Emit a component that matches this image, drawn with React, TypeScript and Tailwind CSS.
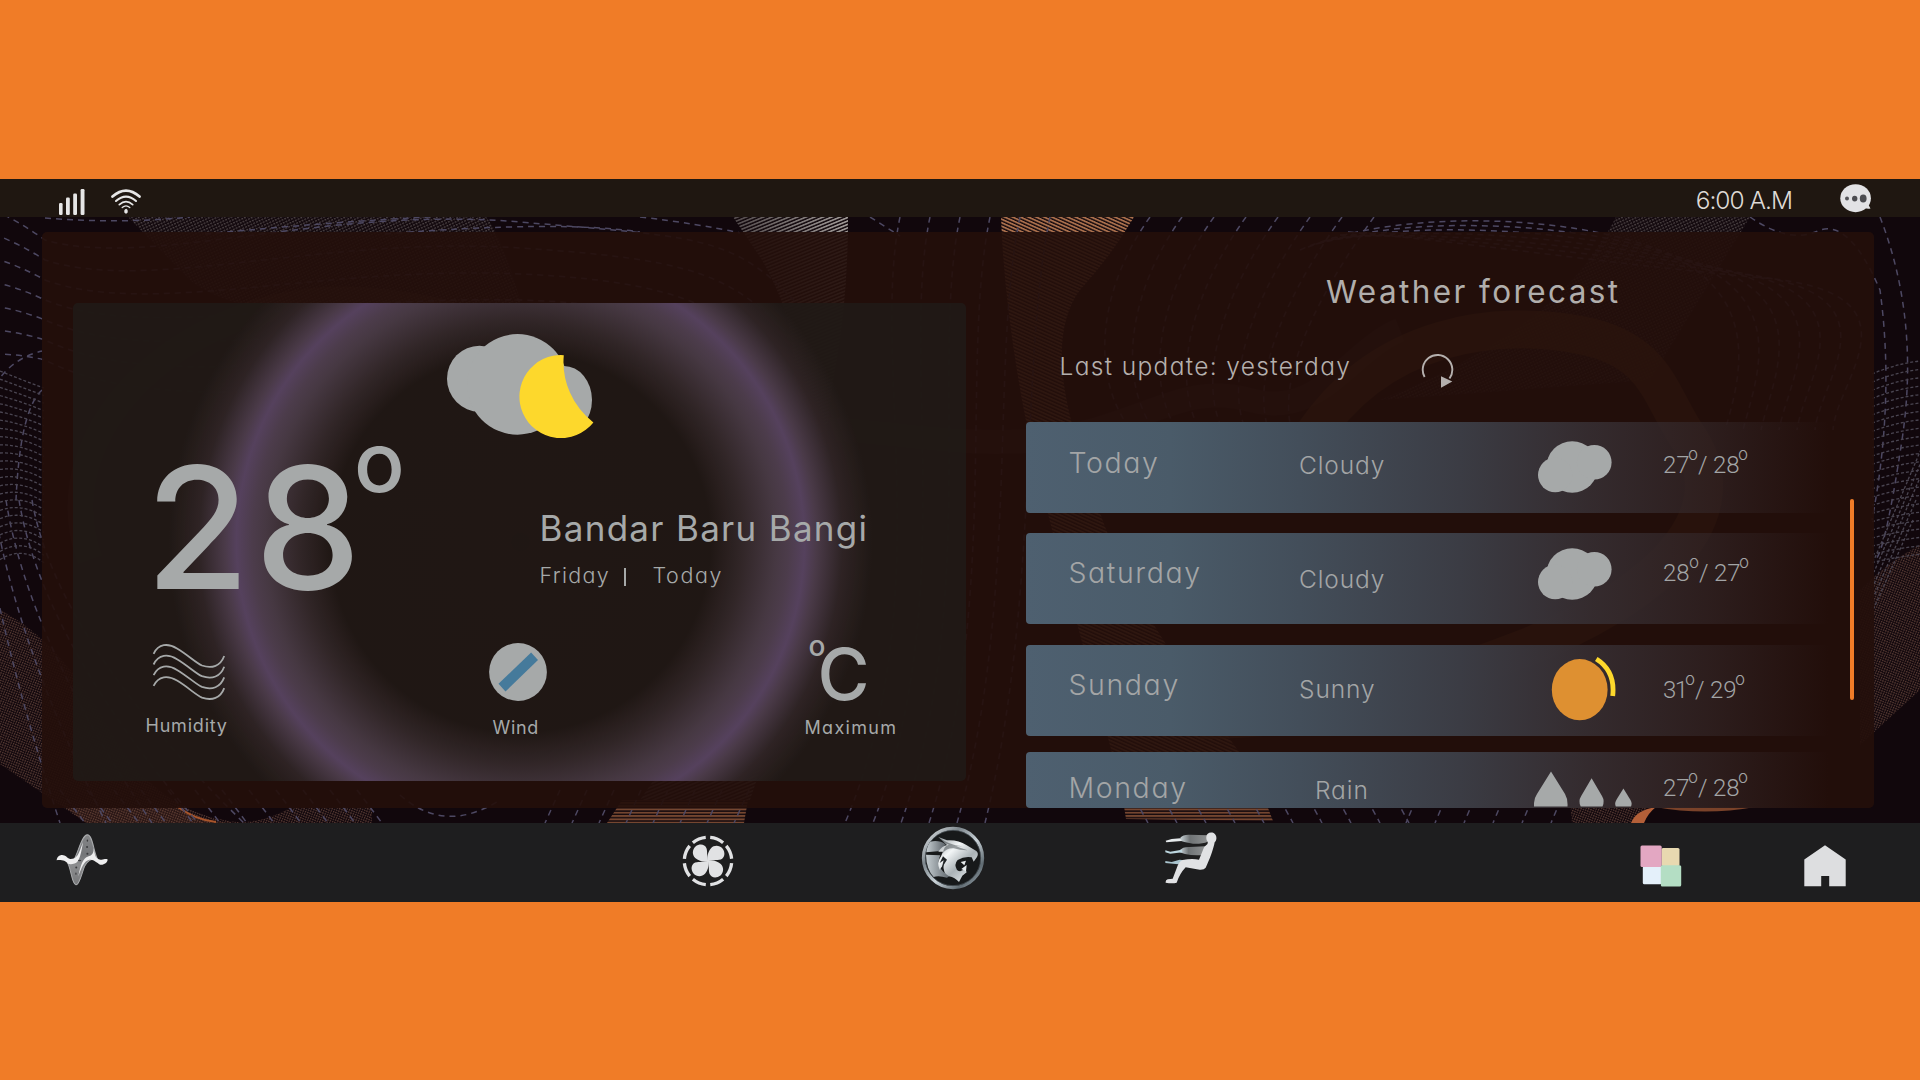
import React from "react";

const range = (n: number) => Array.from({ length: n }, (_, i) => i);

/* Decorative line mesh behind the panels */
function Backdrop() {
  return (
    <svg
      className="absolute inset-0 h-full w-full"
      viewBox="0 217 1920 606"
      preserveAspectRatio="none"
      fill="none"
    >
      <defs>
        <pattern id="whiteHatch" width="5" height="3.2" patternUnits="userSpaceOnUse" patternTransform="rotate(-22)">
          <rect width="5" height="1.7" fill="#a19b98" />
        </pattern>
        <pattern id="orangeHatch" width="5" height="3.2" patternUnits="userSpaceOnUse" patternTransform="rotate(24)">
          <rect width="5" height="1.8" fill="#a96f4c" />
        </pattern>
        <pattern id="flatHatch" width="5" height="3.3" patternUnits="userSpaceOnUse">
          <rect width="5" height="1.9" fill="#754630" />
        </pattern>
        <pattern id="brownDots" width="2.4" height="2.4" patternUnits="userSpaceOnUse" patternTransform="rotate(20)">
          <rect width="1.4" height="1.4" fill="#563a33" />
        </pattern>
        <pattern id="greyDots" width="3" height="3" patternUnits="userSpaceOnUse" patternTransform="rotate(-25)">
          <rect width="2" height="1.4" fill="#4a4142" />
        </pattern>
        <linearGradient id="fadeGrey" gradientUnits="userSpaceOnUse" x1="733" x2="848" y1="0" y2="0">
          <stop offset="0" stopColor="#fff" stopOpacity=".45" />
          <stop offset="1" stopColor="#fff" stopOpacity="1" />
        </linearGradient>
        <mask id="greyMask" maskUnits="userSpaceOnUse" x="540" y="217" width="320" height="606">
          <rect x="540" y="217" width="308" height="606" fill="url(#fadeGrey)" />
        </mask>
      </defs>

      {/* top ribbons */}
      <path d="M128 217H486Q500 232 520 300L528 330Q250 330 190 280Z" fill="url(#greyDots)" />
      <path d="M1616 217H1750L1650 380L1380 400Q1560 330 1616 217Z" fill="url(#greyDots)" />
      <path
        d="M733 217H848Q848 300 835 370C822 440 822 560 790 680L750 800H640C720 690 760 520 790 420C800 350 790 310 762 260Z"
        fill="url(#whiteHatch)"
        mask="url(#greyMask)"
      />
      <path
        d="M1001 217H1134Q1112 255 1080 290C1050 330 1060 400 1090 480C1120 600 1220 720 1272 800H1124C1100 700 1040 500 1022 400Q1004 300 1001 217Z"
        fill="url(#orangeHatch)"
      />

      {/* glowing bands */}
      <path d="M1310 440C1380 330 1500 320 1580 335C1660 350 1660 400 1690 440C1740 520 1650 600 1520 650S1300 720 1200 720" stroke="#7a5020" strokeOpacity=".7" strokeWidth="38" />
      <path d="M90 560C40 420 200 290 360 300S600 380 640 560S520 760 420 640S200 600 300 640" stroke="#6a5040" strokeOpacity=".3" strokeWidth="26" />
      <path d="M740 430C860 420 940 450 1040 440S1180 380 1250 400S1350 350 1400 330" stroke="#806058" strokeOpacity=".22" strokeWidth="24" />

      {/* side and bottom ribbons */}
      <path d="M0 610Q60 640 110 730T250 823H86L0 764Z" fill="url(#brownDots)" />
      <path d="M180 808Q195 823 240 823H86L66 808Z" fill="#7a4a30" fillOpacity=".22" />
      <path d="M290 808H372V823H240Q270 820 290 808Z" fill="url(#brownDots)" />
      <path d="M178 807Q196 820 216 822" stroke="#a8552b" strokeWidth="2" />
      <path d="M622 800H748L744 823H607Z" fill="url(#flatHatch)" />
      <path d="M1123 800H1265L1273 821L1126 819Z" fill="url(#flatHatch)" />
      <path d="M1570 800H1655L1640 823H1572Z" fill="url(#brownDots)" />
      <path d="M1656 807Q1636 810 1631 823H1644Q1648 813 1656 807Z" fill="#b35f38" />
      <path d="M1655 807H1755Q1705 816 1655 807Z" fill="#7a4229" />
      <path d="M1860 590Q1890 560 1920 545V690L1860 745Z" fill="url(#brownDots)" />

      {/* dashed contour lines */}
      <g stroke="#4d4862" strokeWidth="1.5" strokeDasharray="6 5">
        {range(7).map((i) => (
          <path
            key={i}
            d={`M-6 ${210 + i * 24} Q20 ${222 + i * 22} 45 ${240 + i * 20} C150 ${270 + i * 24} 320 ${205 + i * 30} 520 ${222 + i * 26} S740 ${235 + i * 44} 820 ${330 + i * 40}`}
          />
        ))}
        <path d="M45 218Q120 224 190 217" />
        <path d="M205 234Q330 222 430 217" />
        <path d="M385 234Q560 220 640 232" />
        <path d="M640 217Q700 224 740 233" />
        <path d="M-5 385Q12 358 42 351" />
        <path d="M42 390Q20 410 16 500" />
        {range(5).map((i) => (
          <path key={i} d={`M${-20 + i * 13} 500Q${i * 14} 640 ${60 + i * 46} 823`} />
        ))}
        {range(6).map((i) => (
          <path key={i} d={`M${900 + i * 30} 217C${870 + i * 30} 360 ${940 + i * 20} 600 ${845 + i * 28} 823`} />
        ))}
        <path d="M870 217L900 236" />
        {range(8).map((i) => (
          <path key={i} d={`M${1150 + i * 32} 217C${1090 + i * 32} 300 ${1080 + i * 24} 420 ${1180 + i * 20} 470`} />
        ))}
        {range(7).map((i) => (
          <path key={i} d={`M${1300 + i * 8} ${250 - i * 3}C${1400 + i * 10} ${205 + i * 6} 1600 ${215 + i * 8} ${1680 + i * 14} ${260 + i * 3}S${1740 + i * 16} 380 ${1725 + i * 18} 430`} />
        ))}
        <path d="M1750 217Q1790 245 1820 230Q1850 220 1880 290Q1895 400 1872 520" />
        <path d="M1880 217Q1920 320 1902 440T1874 560" />
        {range(12).map((i) => (
          <path key={i} d={`M${60 + i * 27} 790L${85 + i * 27} 823`} />
        ))}
        <path d="M400 795Q445 835 500 800" />
        {range(8).map((i) => (
          <path key={i} d={`M${560 + i * 27} 790L${545 + i * 27} 823`} />
        ))}
        {range(16).map((i) => (
          <path key={i} d={`M${1130 + i * 29} 790L${1148 + i * 29 - (i > 9 ? 32 : 0)} 823`} />
        ))}
      </g>

      {/* dotted mesh at both edges */}
      <g stroke="#4a4551" strokeWidth="1.3" strokeDasharray="3 2">
        {range(24).map((i) => (
          <path key={i} d={`M0 ${371 + i * 8.2}Q22 ${380 + i * 7.6 - i * 0.4} 44 ${388 + i * 7.6}`} />
        ))}
        {range(24).map((i) => (
          <path key={i} d={`M1872 ${374 + i * 8.2}Q1895 ${364 + i * 8.4} 1920 ${361 + i * 8.4}`} />
        ))}
        {range(5).map((i) => (
          <path key={i} d={`M${1925 - i * 3} ${440 + i * 20}L${1874} ${560 + i * 12}`} />
        ))}
      </g>
    </svg>
  );
}

/* ---------- status icons ---------- */
const SignalIcon = () => (
  <svg className="h-[26px] w-[26px]" viewBox="0 0 26 26" fill="#e6e6e6">
    <rect x="0" y="14" width="3.6" height="12" rx="1.2" />
    <rect x="7" y="8.5" width="3.8" height="17.5" rx="1.2" />
    <rect x="14.2" y="4.5" width="3.8" height="21.5" rx="1.2" />
    <rect x="21.6" y="0" width="3.9" height="26" rx="1.2" />
  </svg>
);

const WifiIcon = () => (
  <svg className="h-[25px] w-[30px]" viewBox="0 0 30 25" fill="none" stroke="#e6e6e6" strokeLinecap="round">
    <path d="M1.5 7.6Q15-4.4 28.5 7.6" strokeWidth="2.7" />
    <path d="M5 12Q15 3.2 25 12" strokeWidth="2.1" />
    <path d="M8.3 15.6Q15 9.7 21.7 15.6" strokeWidth="1.7" />
    <path d="M11.2 18.6Q15 15.2 18.8 18.6" strokeWidth="1.3" />
    <rect x="13.6" y="20.3" width="2.8" height="4" rx="1.4" fill="#e6e6e6" strokeWidth=".6" />
  </svg>
);

const ChatIcon = () => (
  <svg className="h-[29px] w-[32px]" viewBox="0 0 32 29">
    <ellipse cx="15.6" cy="14.2" rx="15.3" ry="14" fill="#e2e2e5" />
    <path d="M21 24L28 20L30.5 24.6Q27 25.2 25 24Z" fill="#e2e2e5" />
    <circle cx="7" cy="14.6" r="2" fill="#55555a" />
    <ellipse cx="14.7" cy="14.6" rx="2.7" ry="2.9" fill="#4c4c51" />
    <ellipse cx="23.2" cy="14.4" rx="3.4" ry="4" fill="#4c4c51" />
  </svg>
);

/* ---------- weather icons ---------- */
const CloudMoonIcon = () => (
  <svg className="h-[104px] w-[148px]" viewBox="447 334 148 104" fill="#a6a9a9">
    <ellipse cx="479.5" cy="378.7" rx="32.5" ry="33" />
    <circle cx="517.5" cy="384.4" r="50.3" />
    <ellipse cx="564" cy="400" rx="28" ry="34" />
    <path d="M563.8 355.2A41.5 41.5 0 1 0 593.4 422.4A76 76 0 0 1 563.8 355.2Z" fill="#fdd82c" />
  </svg>
);

const CloudIcon = () => (
  <svg className="h-[52px] w-[74px]" viewBox="0 0 74 52" fill="#a6a9a9">
    <circle cx="34.2" cy="26" r="25.8" />
    <circle cx="17.2" cy="34" r="17.2" />
    <circle cx="56.3" cy="21.3" r="17.3" />
  </svg>
);

const SunIcon = () => (
  <svg className="h-[64px] w-[66px]" viewBox="1551 657 66 64" fill="none">
    <ellipse cx="1579.7" cy="689.7" rx="27.9" ry="30.6" fill="#de9031" />
    <path d="M1596.3 659Q1615.5 671 1612.7 696" stroke="#fdd82c" strokeWidth="4.8" />
  </svg>
);

const RainIcon = () => (
  <svg className="h-[36px] w-[98px]" viewBox="1534 771 98 36" fill="#a6a9a9">
    <path d="M1551 771.5L1565 794Q1568 799 1567.5 806.5H1534Q1533.5 799 1537 794Z" />
    <path d="M1591.6 778.3L1602 796Q1605 801 1602.5 806.5H1580.7Q1578 801 1581.2 796Z" />
    <path d="M1623.4 788.6L1630.5 800Q1632.5 803.5 1631 806.5H1615.8Q1614.3 803.5 1616.3 800Z" />
  </svg>
);

const HumidityIcon = () => (
  <svg className="h-[58px] w-[74px]" viewBox="152 643 74 58" fill="none" stroke="#a6a9a9" strokeWidth="1.8">
    {range(4).map((i) => (
      <path key={i} transform={`translate(0 ${i * 10.7})`} d="M153.6 653.8C158.5 643.5 168 643 177 648.5C188 655 196 663 202 665.5C212 669 220.5 666 224.2 656" />
    ))}
  </svg>
);

const WindIcon = () => (
  <svg className="h-[58px] w-[58px]" viewBox="488.5 643.2 58 58">
    <circle cx="517.5" cy="672.2" r="28.9" fill="#a6a9a9" />
    <path d="M530.6 652.7L537.5 660.3L505 691.7L498 684Z" fill="#457a9b" />
  </svg>
);

const RefreshIcon = () => (
  <svg className="h-[36px] w-[33px]" viewBox="1421 353 33 36" fill="none">
    <path d="M1424.6 378A14.8 14.8 0 1 1 1449.5 379.5" stroke="#b5b0ae" strokeWidth="1.9" />
    <path d="M1441 377.3V388.7L1452.3 382.6Z" fill="#b5b0ae" />
  </svg>
);

/* ---------- dock icons ---------- */
const PulseIcon = () => (
  <svg className="h-[52px] w-[52px]" viewBox="77 71 154 153">
    <defs>
      <linearGradient id="pulse" x1="0" x2="0" y1="0" y2="1">
        <stop offset="0" stopColor="#858688" />
        <stop offset=".4" stopColor="#747679" />
        <stop offset=".6" stopColor="#8c8d8f" />
        <stop offset="1" stopColor="#77787a" />
      </linearGradient>
    </defs>
    <path
      d="M128 150C142 132 152 74 170 73C186 74 188 122 199 143C180 142 170 150 162 165C152 190 147 221 136 221C124 219 122 175 112 157Z"
      fill="url(#pulse)"
      stroke="#a9abad"
      strokeWidth="3"
    />
    <path
      d="M79 148C79 136 92 129 102 134C112 138 112 146 126 144C142 142 148 118 157 94C152 125 147 154 132 158C122 161 116 160 112 158C104 150 98 147 79 148Z"
      fill="#eeeeef"
    />
    <path
      d="M143 196C150 160 158 142 172 137C182 134 188 132 189 112C192 134 194 143 206 146C217 149 222 142 230 146C230 157 214 165 205 160C192 151 188 147 176 147C160 150 152 172 143 196Z"
      fill="#eeeeef"
    />
    <g fill="#3a3b3d">
      <ellipse cx="170" cy="90" rx="2" ry="3.5" />
      <circle cx="169" cy="109" r="3" />
      <circle cx="170" cy="129" r="3" />
      <ellipse cx="147" cy="149" rx="5" ry="2" />
      <circle cx="137" cy="170" r="3" />
      <ellipse cx="136" cy="188" rx="1.8" ry="3.5" />
    </g>
  </svg>
);

const FanIcon = () => (
  <svg className="h-[52px] w-[52px]" viewBox="-26 -26 52 52" fill="#e1e2e4">
    {range(8).map((i) => (
      <path key={i} transform={`rotate(${i * 45})`} d="M2.2 -23.6A23.7 23.7 0 0 1 15.1 -18.3" fill="none" stroke="#e1e2e4" strokeWidth="3.3" />
    ))}
    {range(4).map((i) => (
      <path
        key={i}
        transform={`rotate(${i * 90})`}
        d="M-.5 .5C-1.6 -4 .2 -9.5 3 -12.8C6 -16 11.5 -15.9 14.5 -12.5C17.5 -8.6 17 -3.2 12.8 -1.5C8.6 -.2 4 -1.7 -.5 .5Z"
      />
    ))}
  </svg>
);

const TigerBadge = () => (
  <svg className="h-[64px] w-[64px]" viewBox="784 49 192 192">
    <defs>
      <linearGradient id="chrome" x1="0" y1="0" x2="1" y2="1">
        <stop offset="0" stopColor="#eef2f4" />
        <stop offset=".3" stopColor="#7d868c" />
        <stop offset=".55" stopColor="#c9d2d7" />
        <stop offset=".8" stopColor="#5f6a71" />
        <stop offset="1" stopColor="#aab6bd" />
      </linearGradient>
      <linearGradient id="fur" x1="0" y1="0" x2=".8" y2="1">
        <stop offset="0" stopColor="#8f979b" />
        <stop offset=".35" stopColor="#f3f6f7" />
        <stop offset=".65" stopColor="#aab2b6" />
        <stop offset="1" stopColor="#e8edef" />
      </linearGradient>
      <linearGradient id="neck" x1="0" y1="0" x2="1" y2="0">
        <stop offset="0" stopColor="#c5cdd1" />
        <stop offset="1" stopColor="#596066" />
      </linearGradient>
    </defs>
    <circle cx="880" cy="145" r="88.5" fill="#17191a" stroke="url(#chrome)" strokeWidth="10" />
    <circle cx="880" cy="145" r="83" fill="none" stroke="#4b555b" strokeWidth="2" />
    <path d="M812 96Q838 90 858 104L842 124L800 128Q802 108 812 96Z" fill="url(#neck)" />
    <path d="M799 135L842 137Q832 156 842 176L852 188L874 196L862 204Q836 196 822 202Q800 178 799 135Z" fill="url(#neck)" />
    <path
      d="M836 82L862 92Q896 90 920 106L950 124Q958 132 952 142L942 156L936 143Q914 139 894 151Q882 164 892 181Q904 190 916 176L921 188L908 198L898 217Q886 204 868 200Q848 190 852 164L840 180Q830 158 844 140L850 126L836 126Q848 108 862 106Z"
      fill="url(#fur)"
    />
    <path d="M840 84Q864 104 908 110L890 110Q906 117 924 122Q900 122 882 116Q860 115 850 130Q852 108 868 105Q850 100 840 84Z" fill="#3c4347" fillOpacity=".5" />
    <path d="M862 150L846 176L852 152L840 160L850 140Z" fill="#202426" />
    <path d="M903 157L919 153L914 167ZM905 178L921 166L919 185Z" fill="#e7ecee" />
  </svg>
);

const SeatIcon = () => (
  <svg className="h-[52px] w-[52px]" viewBox="106 67 156 156">
    <defs>
      <linearGradient id="breeze" x1="0" x2="1">
        <stop offset="0" stopColor="#c9d3d8" />
        <stop offset=".35" stopColor="#6f7375" />
        <stop offset="1" stopColor="#8f9192" />
      </linearGradient>
    </defs>
    <path d="M152 84Q160 74 180 75L234 77V96Q218 103 190 102L164 97L152 93Z" fill="url(#breeze)" />
    <path d="M108 93L126 88L152 86L156 94L110 98Z" fill="#e6eaec" />
    <path d="M150 122Q160 111 180 112L226 110L218 136Q190 138 166 133L150 128Z" fill="url(#breeze)" />
    <path d="M107 122L122 126L156 120L158 128L122 132L107 128Z" fill="#bcd6df" />
    <path d="M107 154L126 157L150 150L164 152L146 164L107 160Z" fill="#a9c4ce" />
    <path
      d="M230 82C230 70 242 66 252 70C263 76 262 93 255 98C252 116 240 150 228 174Q223 181 210 180L168 173Q150 192 141 219Q128 223 108 219Q107 211 114 209L129 207L141 176Q147 155 159 151Q186 146 208 150Q214 136 222 116C225 106 236 106 234 97Q229 90 230 82Z"
      fill="#e1e2e4"
    />
  </svg>
);

const TilesIcon = () => (
  <svg className="h-[42px] w-[42px]" viewBox="1640.5 844.8 42 42">
    <rect x="1662" y="847.7" width="18" height="18" rx="1.5" fill="#e8d9b0" />
    <rect x="1643.3" y="866" width="18.5" height="18" rx="1.5" fill="#e4f0fa" />
    <rect x="1641" y="845.3" width="21.2" height="21.4" rx="1.5" fill="#e3a7c2" />
    <rect x="1661.3" y="865" width="20.4" height="21.3" rx="1.5" fill="#b4dec4" />
  </svg>
);

const HomeIcon = () => (
  <svg className="h-[42px] w-[42px]" viewBox="0 0 42 42" fill="#dddee0">
    <path d="M21 .3L41.7 14.5V41.3H25.2V31H17.2V41.3H.3V14.5Z" />
  </svg>
);

/* ---------- forecast ---------- */
type Day = {
  day: string;
  sky: string;
  low: string;
  high: string;
  icon: React.ReactNode;
  row: string;
  dayCls: string;
  skyCls: string;
  iconCls: string;
  tempCls: string;
  lowCls: string;
  highCls: string;
};

const days: Day[] = [
  {
    day: "Today", sky: "Cloudy", low: "27", high: "28", icon: <CloudIcon />,
    row: "h-[91px]",
    dayCls: "mt-[27px]", skyCls: "mt-[31px]",
    iconCls: "mt-[19px] ml-[8px]", tempCls: "mt-[31px]",
    lowCls: "w-[25px]", highCls: "w-[25px]",
  },
  {
    day: "Saturday", sky: "Cloudy", low: "28", high: "27", icon: <CloudIcon />,
    row: "mt-[20px] h-[91px]",
    dayCls: "mt-[26px]", skyCls: "mt-[34px]",
    iconCls: "mt-[15px] ml-[8px]", tempCls: "mt-[28px]",
    lowCls: "w-[26px]", highCls: "w-[25px]",
  },
  {
    day: "Sunday", sky: "Sunny", low: "31", high: "29", icon: <SunIcon />,
    row: "mt-[21px] h-[91px]",
    dayCls: "mt-[26px]", skyCls: "mt-[32px]",
    iconCls: "mt-[12px] ml-[21px]", tempCls: "mt-[33px]",
    lowCls: "w-[22px] tracking-[-1.5px]", highCls: "w-[25px]",
  },
  {
    day: "Monday", sky: "Rain", low: "27", high: "28", icon: <RainIcon />,
    row: "mt-[16px] h-[91px]",
    dayCls: "mt-[22px]", skyCls: "mt-[26px] ml-[16px]",
    iconCls: "mt-[19px] ml-[4px]", tempCls: "mt-[24px]",
    lowCls: "w-[25px]", highCls: "w-[25px]",
  },
];

function ForecastRow(d: Day) {
  return (
    <div
      className={
        "flex w-[803px] shrink-0 rounded-[4px] bg-[linear-gradient(90deg,#4e6070_0%,#4a5b69_18%,#434e5a_34%,#3b3c44_54%,rgba(54,46,50,0.9)_70%,rgba(52,40,42,0.6)_85%,rgba(50,30,30,0)_100%)] pl-[42.5px] text-[#a3a5a6] " +
        d.row
      }
    >
      <div className="w-[230.5px] shrink-0">
        <div className={"text-[28.5px] leading-none font-light tracking-[1.6px] whitespace-nowrap " + d.dayCls}>{d.day}</div>
      </div>
      <div className="w-[231px] shrink-0">
        <div className={"text-[24.5px] leading-none font-light tracking-[0.9px] whitespace-nowrap " + d.skyCls}>{d.sky}</div>
      </div>
      <div className="w-[133px] shrink-0">
        <div className={d.iconCls}>{d.icon}</div>
      </div>
      <div className={"flex font-[Roboto,sans-serif] text-[24px] leading-none font-light whitespace-nowrap " + d.tempCls}>
        <span className={d.lowCls}>{d.low}</span>
        <span className="-mt-[7px] w-[10px] font-[Inter,sans-serif] text-[17px] leading-none">o</span>
        <span className="w-[15px]">/</span>
        <span className={d.highCls}>{d.high}</span>
        <span className="-mt-[7px] font-[Inter,sans-serif] text-[17px] leading-none">o</span>
      </div>
    </div>
  );
}

/* ---------- page ---------- */
export default function App() {
  return (
    <div className="flex h-[1080px] w-[1920px] flex-col overflow-hidden bg-[#f07c27] font-[Inter,sans-serif] [font-feature-settings:'cv11']">
      <header className="mt-[179px] flex h-[38px] shrink-0 items-start bg-[#1f1711] pl-[59px]">
        <div className="mt-[10px]"><SignalIcon /></div>
        <div className="mt-[10px] ml-[26px]"><WifiIcon /></div>
        <div className="mt-[9px] ml-auto text-[24.5px] leading-none font-light tracking-[-1px] text-[#dedad6]">6:00 A.M</div>
        <div className="mt-[5px] mr-[48px] ml-[48px]"><ChatIcon /></div>
      </header>

      <main className="relative h-[606px] shrink-0 bg-[#11070c] pt-[15px] pl-[42px]">
        <Backdrop />
        <div className="relative flex h-[576px] w-[1832px] overflow-hidden rounded-[5px] bg-[#240f0b]/92 pl-[30.5px]">
          {/* current conditions */}
          <section className="mt-[71px] flex h-[478px] w-[893px] shrink-0 flex-col overflow-hidden rounded-[5px] bg-[#201a17]/88 bg-[radial-gradient(circle_at_447.5px_239px,rgba(32,23,20,0.8)_0px,rgba(32,23,20,0.6)_190px,rgba(52,40,42,0.9)_222px,#463842_255px,#4c3c4b_268px,#55415d_284px,#4a3a48_296px,rgba(50,38,40,0.8)_322px,rgba(32,24,20,0)_352px)] text-[#a6a9a9]">
            <div className="mt-[31px] ml-[374.5px] h-[102px] shrink-0"><CloudMoonIcon /></div>
            <div className="flex h-[204px] shrink-0">
              <div className="flex w-[467px] shrink-0 pl-[73px]">
                <span className="mt-[7px] text-[169px] leading-none font-medium tracking-[5px]">28</span>
                <span className="-mt-[16px] ml-[-12px] text-[84px] leading-none font-medium">o</span>
              </div>
              <div>
                <div className="mt-[75px] text-[35px] leading-none font-normal tracking-[1.3px] whitespace-nowrap [font-feature-settings:normal]">
                  Bandar Baru Bangi
                </div>
                <div className="mt-[19px] flex text-[21.5px] leading-none font-light">
                  <span className="w-[84px] tracking-[1.3px]">Friday</span>
                  <span className="mt-[3px] h-[18px] w-[2px] bg-[#a6a9a9]" />
                  <span className="ml-[27px] tracking-[1.6px]">Today</span>
                </div>
              </div>
            </div>
            <div className="flex text-[18px] leading-none">
              <div className="ml-[73px] w-[343px] shrink-0">
                <div className="mt-[3px] ml-[6px]"><HumidityIcon /></div>
                <div className="mt-[16px] tracking-[0.8px]">Humidity</div>
              </div>
              <div className="w-[316px] shrink-0">
                <div className="mt-[3px]"><WindIcon /></div>
                <div className="mt-[18px] ml-[4px] tracking-[0.7px]">Wind</div>
              </div>
              <div>
                <div className="ml-[4px] flex h-[79px]">
                  <span className="-mt-[8px] text-[28px] leading-none font-medium">o</span>
                  <span className="-mt-[1px] -ml-[8px] text-[71px] leading-none font-medium">C</span>
                </div>
                <div className="tracking-[1.3px]">Maximum</div>
              </div>
            </div>
          </section>

          {/* forecast */}
          <section className="ml-[60.5px] flex w-[803px] shrink-0 flex-col">
            <h1 className="mt-[44px] ml-[300px] text-[31.5px] leading-none font-normal tracking-[2.4px] whitespace-nowrap text-[#b1aeac] [font-feature-settings:normal]">
              Weather forecast
            </h1>
            <div className="mt-[44.5px] ml-[33.5px] flex h-[70px] shrink-0 text-[#b5b0ae]">
              <span className="mt-[2px] w-[361.5px] text-[24.5px] leading-none font-light tracking-[1.35px] whitespace-nowrap">
                Last update: yesterday
              </span>
              <RefreshIcon />
            </div>
            <div className="flex h-[386px] shrink-0 flex-col overflow-hidden rounded-bl-[4px]">
              {days.map((d) => (
                <ForecastRow key={d.day} {...d} />
              ))}
            </div>
          </section>
          <div className="mt-[267px] ml-[20.5px] h-[201px] w-[4.5px] rounded-full bg-[#f07c28]" />
        </div>
      </main>

      <nav className="flex h-[79px] shrink-0 items-start bg-[#1e1e1f] pl-[56px]">
        <div className="mt-[11px]"><PulseIcon /></div>
        <div className="mt-[12px] ml-[574px]"><FanIcon /></div>
        <div className="mt-[3px] ml-[187px]"><TigerBadge /></div>
        <div className="mt-[9px] ml-[180px]"><SeatIcon /></div>
        <div className="mt-[22px] ml-[423px]"><TilesIcon /></div>
        <div className="mt-[22px] ml-[122px]"><HomeIcon /></div>
      </nav>
    </div>
  );
}
